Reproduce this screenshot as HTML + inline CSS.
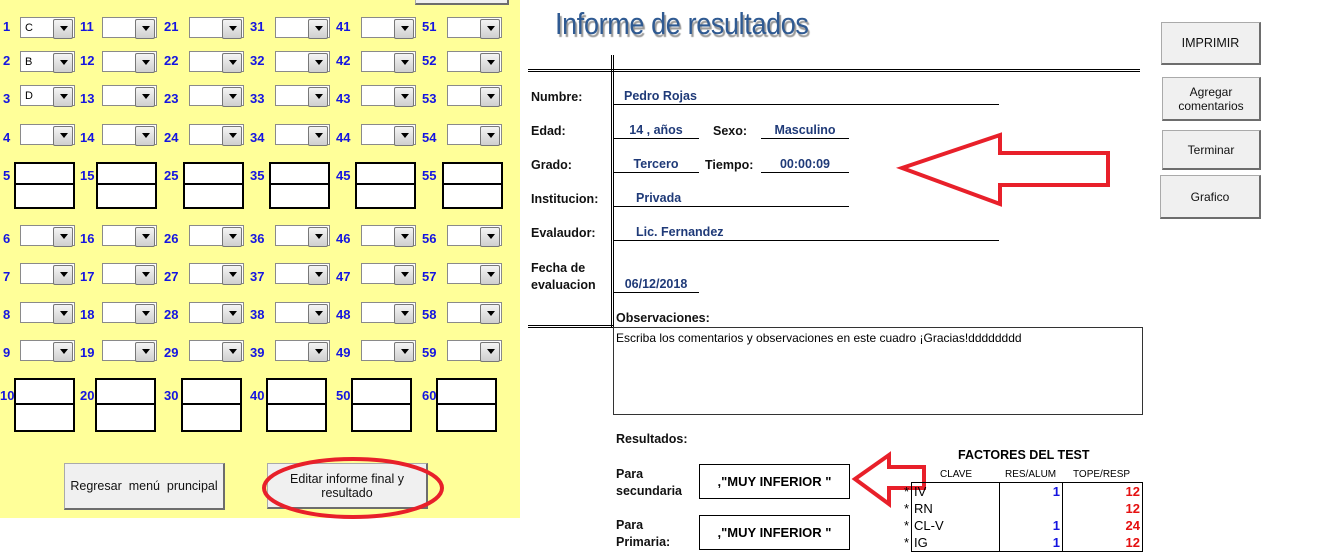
<!DOCTYPE html>
<html><head><meta charset="utf-8"><style>
*{margin:0;padding:0;box-sizing:border-box}
body{width:1320px;height:550px;background:#fff;position:relative;overflow:hidden;font-family:"Liberation Sans",Arial,sans-serif}
.a{position:absolute}
#yl{left:0;top:0;width:520px;height:518px;background:#ffff99}
.n{position:absolute;font-weight:bold;font-size:13px;color:#1515e0}
.d{position:absolute;width:55px;height:21px;background:#fff;border:1px solid #8a8a8a;font-size:11px;padding:4px 0 0 4px}
.d::after{content:"";position:absolute;right:1px;top:1px;width:18px;height:18px;background:linear-gradient(#f4f4f4,#cfcfcf);border:1px solid #777;border-radius:2px}
.d::before{content:"";position:absolute;right:6px;top:8px;border-left:4px solid transparent;border-right:4px solid transparent;border-top:5px solid #000;z-index:2}
.b{position:absolute;width:61px;background:#fff;border:2px solid #000}
.b::after{content:"";position:absolute;left:0;right:0;top:45%;border-top:2px solid #000}
.btn{position:absolute;background:#f0f0f0;border:1px solid #aaa;border-right:2px solid #6d6d6d;border-bottom:2px solid #6d6d6d;font-size:12px;color:#111;display:flex;align-items:center;justify-content:center;text-align:center;line-height:14px}
.l{position:absolute;font-weight:bold;font-size:12.5px;color:#111}
.v{position:absolute;font-weight:bold;font-size:12.5px;color:#1f3a78;border-bottom:1px solid #000;height:16px;text-align:center}
.hl{position:absolute;border-top:1px solid #000}
</style></head><body>
<div class="a" id="yl"></div>
<div class="btn" style="left:415px;top:-30px;width:94px;height:35px"></div>

<div class="n" style="left:3px;top:19px">1</div><div class="d" style="left:20px;top:17px">C</div>
<div class="n" style="left:80px;top:19px">11</div><div class="d" style="left:102px;top:17px"></div>
<div class="n" style="left:164px;top:19px">21</div><div class="d" style="left:189px;top:17px"></div>
<div class="n" style="left:250px;top:19px">31</div><div class="d" style="left:275px;top:17px"></div>
<div class="n" style="left:336px;top:19px">41</div><div class="d" style="left:361px;top:17px"></div>
<div class="n" style="left:422px;top:19px">51</div><div class="d" style="left:447px;top:17px"></div>

<div class="n" style="left:3px;top:53px">2</div><div class="d" style="left:20px;top:51px">B</div>
<div class="n" style="left:80px;top:53px">12</div><div class="d" style="left:102px;top:51px"></div>
<div class="n" style="left:164px;top:53px">22</div><div class="d" style="left:189px;top:51px"></div>
<div class="n" style="left:250px;top:53px">32</div><div class="d" style="left:275px;top:51px"></div>
<div class="n" style="left:336px;top:53px">42</div><div class="d" style="left:361px;top:51px"></div>
<div class="n" style="left:422px;top:53px">52</div><div class="d" style="left:447px;top:51px"></div>

<div class="n" style="left:3px;top:91px">3</div><div class="d" style="left:20px;top:85px">D</div>
<div class="n" style="left:80px;top:91px">13</div><div class="d" style="left:102px;top:85px"></div>
<div class="n" style="left:164px;top:91px">23</div><div class="d" style="left:189px;top:85px"></div>
<div class="n" style="left:250px;top:91px">33</div><div class="d" style="left:275px;top:85px"></div>
<div class="n" style="left:336px;top:91px">43</div><div class="d" style="left:361px;top:85px"></div>
<div class="n" style="left:422px;top:91px">53</div><div class="d" style="left:447px;top:85px"></div>

<div class="n" style="left:3px;top:130px">4</div><div class="d" style="left:20px;top:124px"></div>
<div class="n" style="left:80px;top:130px">14</div><div class="d" style="left:102px;top:124px"></div>
<div class="n" style="left:164px;top:130px">24</div><div class="d" style="left:189px;top:124px"></div>
<div class="n" style="left:250px;top:130px">34</div><div class="d" style="left:275px;top:124px"></div>
<div class="n" style="left:336px;top:130px">44</div><div class="d" style="left:361px;top:124px"></div>
<div class="n" style="left:422px;top:130px">54</div><div class="d" style="left:447px;top:124px"></div>

<div class="n" style="left:3px;top:168px">5</div><div class="b" style="left:14px;top:162px;height:47px"></div>
<div class="n" style="left:80px;top:168px">15</div><div class="b" style="left:96px;top:162px;height:47px"></div>
<div class="n" style="left:164px;top:168px">25</div><div class="b" style="left:183px;top:162px;height:47px"></div>
<div class="n" style="left:250px;top:168px">35</div><div class="b" style="left:269px;top:162px;height:47px"></div>
<div class="n" style="left:336px;top:168px">45</div><div class="b" style="left:355px;top:162px;height:47px"></div>
<div class="n" style="left:422px;top:168px">55</div><div class="b" style="left:442px;top:162px;height:47px"></div>

<div class="n" style="left:3px;top:231px">6</div><div class="d" style="left:20px;top:225px"></div>
<div class="n" style="left:80px;top:231px">16</div><div class="d" style="left:102px;top:225px"></div>
<div class="n" style="left:164px;top:231px">26</div><div class="d" style="left:189px;top:225px"></div>
<div class="n" style="left:250px;top:231px">36</div><div class="d" style="left:275px;top:225px"></div>
<div class="n" style="left:336px;top:231px">46</div><div class="d" style="left:361px;top:225px"></div>
<div class="n" style="left:422px;top:231px">56</div><div class="d" style="left:447px;top:225px"></div>

<div class="n" style="left:3px;top:269px">7</div><div class="d" style="left:20px;top:263px"></div>
<div class="n" style="left:80px;top:269px">17</div><div class="d" style="left:102px;top:263px"></div>
<div class="n" style="left:164px;top:269px">27</div><div class="d" style="left:189px;top:263px"></div>
<div class="n" style="left:250px;top:269px">37</div><div class="d" style="left:275px;top:263px"></div>
<div class="n" style="left:336px;top:269px">47</div><div class="d" style="left:361px;top:263px"></div>
<div class="n" style="left:422px;top:269px">57</div><div class="d" style="left:447px;top:263px"></div>

<div class="n" style="left:3px;top:307px">8</div><div class="d" style="left:20px;top:302px"></div>
<div class="n" style="left:80px;top:307px">18</div><div class="d" style="left:102px;top:302px"></div>
<div class="n" style="left:164px;top:307px">28</div><div class="d" style="left:189px;top:302px"></div>
<div class="n" style="left:250px;top:307px">38</div><div class="d" style="left:275px;top:302px"></div>
<div class="n" style="left:336px;top:307px">48</div><div class="d" style="left:361px;top:302px"></div>
<div class="n" style="left:422px;top:307px">58</div><div class="d" style="left:447px;top:302px"></div>

<div class="n" style="left:3px;top:345px">9</div><div class="d" style="left:20px;top:340px"></div>
<div class="n" style="left:80px;top:345px">19</div><div class="d" style="left:102px;top:340px"></div>
<div class="n" style="left:164px;top:345px">29</div><div class="d" style="left:189px;top:340px"></div>
<div class="n" style="left:250px;top:345px">39</div><div class="d" style="left:275px;top:340px"></div>
<div class="n" style="left:336px;top:345px">49</div><div class="d" style="left:361px;top:340px"></div>
<div class="n" style="left:422px;top:345px">59</div><div class="d" style="left:447px;top:340px"></div>

<div class="n" style="left:0px;top:388px">10</div><div class="b" style="left:14px;top:378px;height:54px"></div>
<div class="n" style="left:80px;top:388px">20</div><div class="b" style="left:95px;top:378px;height:54px"></div>
<div class="n" style="left:164px;top:388px">30</div><div class="b" style="left:181px;top:378px;height:54px"></div>
<div class="n" style="left:250px;top:388px">40</div><div class="b" style="left:266px;top:378px;height:54px"></div>
<div class="n" style="left:336px;top:388px">50</div><div class="b" style="left:351px;top:378px;height:54px"></div>
<div class="n" style="left:422px;top:388px">60</div><div class="b" style="left:436px;top:378px;height:54px"></div>

<div class="btn" style="left:64px;top:463px;width:161px;height:47px;font-size:12.5px">Regresar&nbsp; menú&nbsp; pruncipal</div>
<div class="btn" style="left:267px;top:463px;width:161px;height:46px;font-size:12.5px">Editar informe final y<br>resultado</div>
<svg class="a" style="left:0;top:0" width="1320" height="550">
<ellipse cx="353" cy="488" rx="89" ry="29" fill="none" stroke="#e8202a" stroke-width="4"/>
<polygon points="902,168 1000,135 1000,153 1108,153 1108,185 1000,185 1000,204" fill="none" stroke="#e8202a" stroke-width="4" stroke-linejoin="miter"/>
<polygon points="855,479 889,455 889,467 924,467 924,488 889,488 889,504" fill="none" stroke="#e8202a" stroke-width="4"/>
</svg>

<div class="a" style="left:555px;top:6px;font-size:31px;color:#2f5a92;transform:scaleX(0.87);transform-origin:left;letter-spacing:-0.4px;text-shadow:2px 3px 1px #9a9a9a">Informe de resultados</div>
<div class="hl" style="left:528px;top:69px;width:612px"></div>
<div class="hl" style="left:528px;top:71px;width:612px"></div>
<div class="a" style="left:611px;top:55px;width:3px;height:273px;border-left:1px solid #000;border-right:1px solid #000"></div>
<div class="hl" style="left:528px;top:325px;width:85px"></div>
<div class="hl" style="left:528px;top:327px;width:85px"></div>

<div class="l" style="left:531px;top:90px">Numbre:</div>
<div class="v" style="left:613px;top:89px;width:386px;text-align:left;padding-left:11px">Pedro Rojas</div>
<div class="l" style="left:531px;top:124px">Edad:</div>
<div class="v" style="left:613px;top:123px;width:86px">14 , años</div>
<div class="l" style="left:713px;top:124px">Sexo:</div>
<div class="v" style="left:761px;top:123px;width:88px">Masculino</div>
<div class="l" style="left:531px;top:158px">Grado:</div>
<div class="v" style="left:613px;top:157px;width:86px">Tercero</div>
<div class="l" style="left:705px;top:158px">Tiempo:</div>
<div class="v" style="left:761px;top:157px;width:88px">00:00:09</div>
<div class="l" style="left:531px;top:192px">Institucion:</div>
<div class="v" style="left:613px;top:191px;width:236px;text-align:left;padding-left:23px">Privada</div>
<div class="l" style="left:531px;top:226px">Evalaudor:</div>
<div class="v" style="left:613px;top:225px;width:386px;text-align:left;padding-left:23px">Lic. Fernandez</div>
<div class="l" style="left:531px;top:260px;line-height:17px">Fecha de<br>evaluacion</div>
<div class="v" style="left:613px;top:277px;width:86px">06/12/2018</div>

<div class="l" style="left:616px;top:311px">Observaciones:</div>
<div class="a" style="left:613px;top:327px;width:530px;height:88px;border:1px solid #333;font-size:12px;padding:3px 2px">Escriba los comentarios y observaciones en este cuadro ¡Gracias!dddddddd</div>

<div class="l" style="left:616px;top:432px">Resultados:</div>
<div class="l" style="left:616px;top:466px;line-height:17px">Para<br>secundaria</div>
<div class="a" style="left:699px;top:464px;width:151px;height:35px;border:1px solid #000;font-weight:bold;font-size:13px;display:flex;align-items:center;justify-content:center">,"MUY INFERIOR "</div>
<div class="l" style="left:616px;top:517px;line-height:17px">Para<br>Primaria:</div>
<div class="a" style="left:699px;top:515px;width:151px;height:35px;border:1px solid #000;font-weight:bold;font-size:13px;display:flex;align-items:center;justify-content:center">,"MUY INFERIOR "</div>

<div class="a" style="left:958px;top:448px;font-weight:bold;font-size:12.5px">FACTORES DEL TEST</div>
<div class="a" style="left:940px;top:469px;font-size:10px">CLAVE</div>
<div class="a" style="left:1005px;top:469px;font-size:10px">RES/ALUM</div>
<div class="a" style="left:1073px;top:469px;font-size:10px">TOPE/RESP</div>
<div class="a" style="left:911px;top:482px;width:232px;height:70px;border:1px solid #000"></div>
<div class="a" style="left:999px;top:482px;height:70px;border-left:1px solid #000"></div>
<div class="a" style="left:1062px;top:482px;height:70px;border-left:1px solid #000"></div>
<div class="a" style="left:904px;top:483px;font-size:13px;line-height:17px">*<br>*<br>*<br>*</div>
<div class="a" style="left:914px;top:483px;font-size:13px;line-height:17px">IV<br>RN<br>CL-V<br>IG</div>
<div class="a" style="left:1000px;top:483px;width:60px;text-align:right;font-size:13px;line-height:17px;font-weight:bold;color:#1515e0">1<br>&nbsp;<br>1<br>1</div>
<div class="a" style="left:1063px;top:483px;width:77px;text-align:right;font-size:13px;line-height:17px;font-weight:bold;color:#e51010">12<br>12<br>24<br>12</div>

<div class="btn" style="left:1161px;top:22px;width:100px;height:43px;font-size:12.5px">IMPRIMIR</div>
<div class="btn" style="left:1162px;top:77px;width:99px;height:44px">Agregar<br>comentarios</div>
<div class="btn" style="left:1162px;top:130px;width:99px;height:40px">Terminar</div>
<div class="btn" style="left:1160px;top:175px;width:101px;height:44px">Grafico</div>
</body></html>
